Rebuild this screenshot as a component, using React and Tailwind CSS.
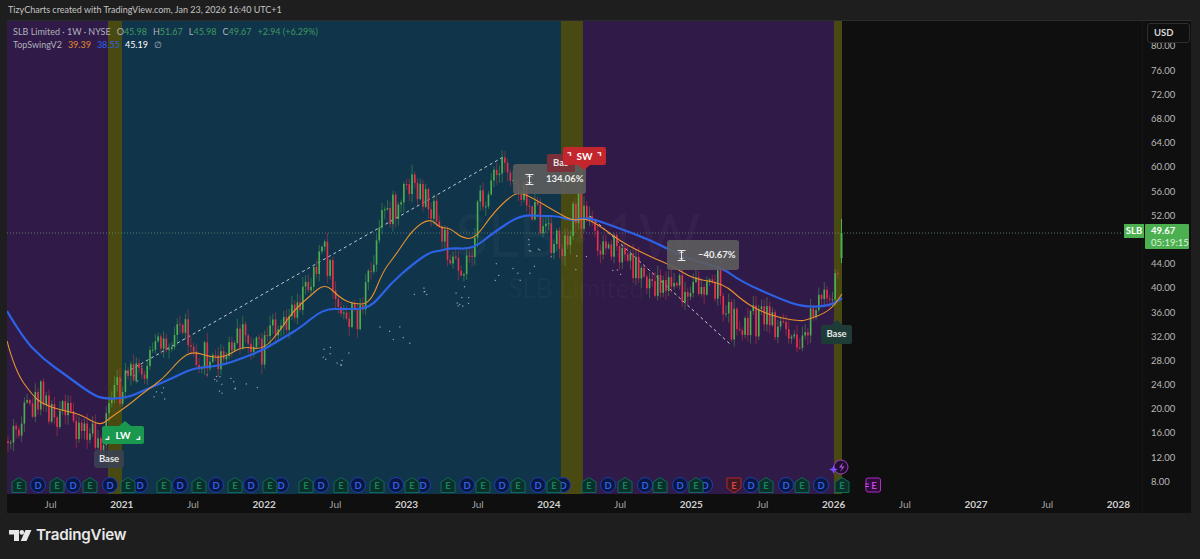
import React from "react";

const sans = "font-['Lato','Liberation_Sans',sans-serif]";
const svgFont = "Lato, sans-serif";

// price path the candles follow, page coordinates
const pricePath = [[7,440],[20,425],[40,395],[50,410],[60,412],[75,420],[90,435],[103,440],[108,415],[115,395],[125,385],[135,375],[150,358],[165,340],[182,322],[195,350],[210,362],[225,360],[240,335],[255,345],[262,358],[275,320],[290,310],[305,290],[322,245],[335,290],[340,322],[360,310],[375,260],[385,205],[395,210],[412,185],[425,195],[445,240],[460,265],[470,250],[478,210],[490,185],[505,170],[520,185],[535,215],[550,240],[565,240],[575,205],[585,215],[600,240],[620,255],[640,270],[660,285],[675,285],[690,300],[700,282],[720,282],[725,310],[732,325],[750,320],[770,320],[790,325],[803,335],[815,315],[830,295],[834,280],[842,232]];
const orange = [[7,340],[15,370],[33,395],[43,403],[60,409],[80,413],[100,425],[110,417],[130,403],[143,392],[163,378],[180,358],[193,350],[213,357],[227,355],[243,345],[263,349],[280,330],[293,310],[310,295],[325,282],[340,297],[353,303],[370,303],[383,270],[395,255],[413,228],[430,217],[440,227],[450,227],[462,237],[475,238],[493,212],[513,193],[523,192],[543,203],[558,212],[573,220],[587,217],[607,230],[623,242],[653,257],[673,265],[693,278],[723,282],[743,300],[760,310],[780,317],[800,320],[807,319],[830,310],[842,293]];
const blue = [[7,310],[23,337],[43,358],[67,375],[90,392],[103,398],[127,397],[147,388],[173,377],[193,367],[220,365],[243,357],[263,349],[283,337],[300,327],[323,308],[345,308],[370,308],[390,283],[413,263],[430,251],[440,250],[450,247],[473,248],[493,232],[520,214],[543,215],[558,215],[573,220],[587,216],[613,225],[653,240],[687,258],[723,267],[740,280],[780,298],[803,306],[830,305],[842,297]];

function rng(seed) {
  return () => {
    seed = (seed + 0x6d2b79f5) | 0;
    let t = Math.imul(seed ^ (seed >>> 15), 1 | seed);
    t = (t + Math.imul(t ^ (t >>> 7), 61 | t)) ^ t;
    return ((t ^ (t >>> 14)) >>> 0) / 4294967296;
  };
}

function priceAt(x) {
  for (let i = 1; i < pricePath.length; i++) {
    const [x0, y0] = pricePath[i - 1];
    const [x1, y1] = pricePath[i];
    if (x <= x1) return y0 + ((y1 - y0) * (x - x0)) / (x1 - x0);
  }
  return 232;
}

function makeCandles() {
  const r = rng(42);
  const out = [];
  let prev = priceAt(7);
  for (let x = 8; x < 840; x += 2.73) {
    const close = priceAt(x) + (r() - 0.5) * 34;
    const top = Math.min(prev, close);
    const bottom = Math.max(prev, close);
    out.push({
      x,
      open: prev,
      close,
      high: top - r() * 9 - 1,
      low: bottom + r() * 9 + 1,
    });
    prev = close;
  }
  return out;
}

function makeDots() {
  const r = rng(7);
  const clusters = [[232,382,14,26,10],[132,372,5,14,8],[165,392,5,14,6],[335,355,10,16,10],[455,295,9,14,10],[395,335,6,16,10],[420,285,5,14,8],[512,265,8,24,14],[540,248,7,18,10],[580,262,3,6,8],[620,270,3,12,6]];
  const dots = [];
  clusters.forEach(([cx, cy, n, sx, sy]) => {
    for (let i = 0; i < n; i++) {
      dots.push([cx + (r() - 0.5) * sx * 2, cy + (r() - 0.5) * sy * 2]);
    }
  });
  return dots;
}

// rounds the corners of a polyline through the midpoints
function smooth(pts) {
  let d = `M${pts[0][0]} ${pts[0][1]}`;
  for (let i = 1; i < pts.length - 1; i++) {
    const mx = (pts[i][0] + pts[i + 1][0]) / 2;
    const my = (pts[i][1] + pts[i + 1][1]) / 2;
    d += `Q${pts[i][0]} ${pts[i][1]} ${mx} ${my}`;
  }
  const last = pts[pts.length - 1];
  return `${d}L${last[0]} ${last[1]}`;
}

const candles = makeCandles();
const dots = makeDots();

const earnings = [19,57,90,128,164,199,235,270,306,341,377,412,448,483,518,554,589,625,660,696,766,802,842];
const dividends = [38,73,110,140,180,216,251,281,321,358,396,423,467,502,538,563,608,645,680,705,751,786,821];

const prices = ["80.00","76.00","72.00","68.00","64.00","60.00","56.00","52.00","","44.00","40.00","36.00","32.00","28.00","24.00","20.00","16.00","12.00","8.00"];
const times = ["Jul","2021","Jul","2022","Jul","2023","Jul","2024","Jul","2025","Jul","2026","Jul","2027","Jul","2028"];

function EarningMark({ x, red }) {
  return (
    <g>
      <path
        d={red
          ? `M${x - 7} 477h14v10l-7 5l-7-5z`
          : `M${x} 476.5l7 4.5v10.5h-14v-10.5z`}
        fill={red ? "#3f1a20" : "#0b2f2a"}
        stroke={red ? "#b3262e" : "#0e6b58"}
        strokeWidth="1"
      />
      <text x={x} y="488" textAnchor="middle" fontSize="9.5" fontWeight="700" fill={red ? "#d9434c" : "#17865f"} fontFamily={svgFont}>E</text>
    </g>
  );
}

function DividendMark({ x }) {
  return (
    <g>
      <circle cx={x} cy="484" r="7.5" fill="#0a1740" stroke="#1c3fb0" strokeWidth="1" />
      <text x={x} y="487.5" textAnchor="middle" fontSize="9.5" fontWeight="700" fill="#2f5fe8" fontFamily={svgFont}>D</text>
    </g>
  );
}

function Chart() {
  return (
    <svg viewBox="7 20 1135 473" className="block w-full h-full">
      <rect x="7" y="20" width="101" height="473" fill="#301a48" />
      <rect x="108" y="20" width="14" height="473" fill="#484a12" />
      <rect x="122" y="20" width="439" height="473" fill="#10344a" />
      <rect x="561" y="20" width="22" height="473" fill="#484a12" />
      <rect x="583" y="20" width="251" height="473" fill="#301a48" />
      <rect x="834" y="20" width="8" height="473" fill="#484a12" />

      <text x="578" y="256" textAnchor="middle" fontSize="60" fontFamily={svgFont} fill="#ffffff" fillOpacity="0.03">SLB · 1W</text>
      <text x="576" y="297" textAnchor="middle" fontSize="26" fontFamily={svgFont} fill="#ffffff" fillOpacity="0.03">SLB Limited</text>

      <line x1="7" y1="232" x2="1123" y2="232" stroke="#6f8f78" strokeWidth="0.8" strokeDasharray="1 2" />

      {dots.map(([x, y], i) => (
        <rect key={i} x={x} y={y} width="1.2" height="1.2" fill="#c8ced8" fillOpacity="0.75" />
      ))}

      <polyline points="125,372 505,155" fill="none" stroke="#d8dce2" strokeWidth="0.9" strokeDasharray="3 3" />
      <polyline points="590,215 730,343" fill="none" stroke="#d8dce2" strokeWidth="0.9" strokeDasharray="3 3" />

      {candles.map((c, i) => {
        const up = c.close < c.open;
        const color = up ? "#4caf50" : "#e8324a";
        return (
          <g key={i}>
            <line x1={c.x} x2={c.x} y1={c.high} y2={c.low} stroke={color} strokeOpacity="0.8" strokeWidth="0.6" />
            <rect x={c.x - 0.8} y={Math.min(c.open, c.close)} width="1.6" height={Math.max(Math.abs(c.open - c.close), 1)} fill={color} />
          </g>
        );
      })}
      <line x1="841.5" x2="841.5" y1="218" y2="262" stroke="#4caf50" strokeWidth="1" />
      <rect x="840.5" y="232" width="2" height="25" fill="#4caf50" />

      <path d={smooth(blue)} fill="none" stroke="#2d62e6" strokeWidth="2.2" />
      <path d={smooth(orange)} fill="none" stroke="#e8912d" strokeWidth="1.1" />

      {dividends.map((x) => <DividendMark key={x} x={x} />)}
      {earnings.map((x) => <EarningMark key={x} x={x} />)}
      <EarningMark x={734} red />

      <circle cx="841" cy="466" r="7" fill="#1f1030" stroke="#a43cc4" strokeWidth="1" />
      <path d="M843 461.5l-4 5h3l-2 4.5l4.5-5.5h-3z" fill="#c04fe0" />
      <path d="M833.5 464l1.2 3.3l3.3 1.2l-3.3 1.2l-1.2 3.3l-1.2-3.3l-3.3-1.2l3.3-1.2z" fill="#7c4dff" />
      <rect x="866" y="477" width="14.5" height="14" rx="2" fill="#2b0d35" stroke="#b02cc8" strokeWidth="1" />
      <path d="M865 483h4M865 485.5h4" stroke="#d040e8" strokeWidth="1" />
      <text x="874" y="488" textAnchor="middle" fontSize="9.5" fontWeight="700" fill="#d040e8" fontFamily={svgFont}>E</text>
    </svg>
  );
}

function MeasureIcon() {
  return (
    <svg width="9" height="11" viewBox="0 0 9 11" fill="none" stroke="#e8e8e8" strokeWidth="1">
      <path d="M0.5 0.5h8M0.5 10.5h8M4.5 1v9M2.5 3.2l2-2l2 2M2.5 7.8l2 2l2-2" />
    </svg>
  );
}

function Measure({ className, children }) {
  return (
    <div className={`absolute h-[30px] bg-[#5d5d5d]/90 rounded-[3px] flex items-center text-[9.5px] font-bold text-[#ececec] ${className}`}>
      <MeasureIcon />
      <span className="ml-[12px]">{children}</span>
    </div>
  );
}

export default function App() {
  return (
    <div className={`w-[1200px] h-[559px] overflow-hidden bg-[#1e1e1e] flex flex-col ${sans}`}>
      <div className="h-[20px] pl-2 flex items-center text-[9px] text-[#c4c4c4]">
        TizyCharts created with TradingView.com, Jan 23, 2026 16:40 UTC+1
      </div>

      <div className="ml-[7px] w-[1184px] h-[493px] bg-[#0f0f0f] flex border-t border-[#2a2d2e]">
        <div className="w-[1135px] flex flex-col">
          <div className="relative h-[473px]">
            <Chart />

            <div className="absolute left-[6px] top-[4px] text-[9px] leading-[13px] text-[#aeb2ba]">
              <div className="flex">
                <span>SLB Limited · 1W · NYSE</span>
                <span className="ml-[6px] text-[#aeb2ba]">O<span className="text-[#3f9a62]">45.98</span></span>
                <span className="ml-[6px]">H<span className="text-[#3f9a62]">51.67</span></span>
                <span className="ml-[6px]">L<span className="text-[#3f9a62]">45.98</span></span>
                <span className="ml-[6px]">C<span className="text-[#3f9a62]">49.67</span></span>
                <span className="ml-[6px] text-[#3f9a62]">+2.94 (+6.29%)</span>
              </div>
              <div className="flex">
                <span>TopSwingV2</span>
                <span className="ml-[6px] text-[#e8892d]">39.39</span>
                <span className="ml-[6px] text-[#2d62e6]">38.55</span>
                <span className="ml-[5px] text-white">45.19</span>
                <span className="ml-[6px]">∅</span>
              </div>
            </div>

            <Measure className="left-[506px] top-[143px] w-[73px] pl-[12px]">134.06%</Measure>
            <Measure className="left-[660px] top-[219px] w-[72px] pl-[10px]">−40.67%</Measure>

            <div className="absolute left-[87px] top-[429px] w-[30px] h-[18px] rounded-[3px] bg-[#3b4150]/90 flex items-center justify-center text-[9.5px] font-bold text-[#e6e6e6]">Base</div>
            <div className="absolute left-[95px] top-[405px] w-[42px] h-[18px] rounded-[2px] bg-[#1a9850] flex items-center justify-center text-[10px] font-bold text-white gap-[5px]">
              <span className="absolute left-[23px] -top-[5px] w-0 h-0 border-x-[6px] border-x-transparent border-b-[5px] border-b-[#1a9850] -translate-x-[6px]" />
              <span>⌟</span><span>LW</span><span>⌟</span>
            </div>

            <div className="absolute left-[540px] top-[133px] w-[28px] h-[18px] rounded-[2px] bg-[#7a3038] flex items-center pl-[6px] text-[9.5px] font-bold text-[#e6e6e6]">Bas</div>
            <div className="absolute left-[556px] top-[126px] w-[43px] h-[18px] rounded-[2px] bg-[#c4262e] flex items-center justify-center text-[10px] font-bold text-white gap-[5px]">
              <span>⌝</span><span>SW</span><span>⌝</span>
              <span className="absolute left-[15px] top-[18px] w-0 h-0 border-x-[6px] border-x-transparent border-t-[5px] border-t-[#c4262e]" />
            </div>

            <div className="absolute left-[814px] top-[304px] w-[31px] h-[19px] rounded-[2px] bg-[#1d3c38] flex items-center justify-center text-[9.5px] font-bold text-[#e6e6e6]">
              <span className="absolute left-[9.5px] -top-[5px] w-0 h-0 border-x-[6px] border-x-transparent border-b-[5px] border-b-[#1d3c38]" />
              Base
            </div>
          </div>

          <div className="h-[20px] pl-[8px] flex items-center text-[10px] border-t border-[#0f0f0f]">
            {times.map((t, i) => (
              <span key={i} className={`w-[71.2px] shrink-0 text-center ${t === "Jul" ? "text-[#a4a4a4]" : "text-[#d0d0d0] font-bold"}`}>{t}</span>
            ))}
          </div>
        </div>

        <div className="relative w-[49px] border-l border-[#161616]">
          <div className="pt-[13.5px] pl-[8px] text-[9.5px] text-[#b8b8b8]">
            {prices.map((p, i) => (
              <div key={i} className="h-[24.2px] flex items-center">{p}</div>
            ))}
          </div>

          <div className="absolute left-[4px] top-[2px] w-[43px] h-[20px] bg-[#0f0f0f] border border-[#2e2e2e] rounded-[3px] flex items-center pl-[6px] text-[9.5px] font-bold text-[#d6d6d6]">USD</div>

          <div className="absolute -left-[19px] top-[203px] w-[20px] h-[14px] bg-[#4caf50] flex items-center justify-center text-[9.5px] font-bold text-white">SLB</div>
          <div className="absolute left-[2px] top-[203px] w-[44px] h-[25px] bg-[#4caf50] rounded-[1px] flex flex-col justify-center pl-[6px] text-[9.5px] leading-[12px] text-white">
            <span className="font-bold">49.67</span>
            <span className="text-[#dff2df]">05:19:15</span>
          </div>
        </div>
      </div>

      <div className="flex-1 flex items-center pl-[9px] pb-[1px]">
        <svg width="23" height="12" viewBox="0 0 23 12" fill="#e8e8e8">
          <path d="M0 0h10v11h-5v-6.5h-5z" />
          <circle cx="12.8" cy="2.4" r="2.3" />
          <path d="M16.5 0h6l-5 11h-5.8z" />
        </svg>
        <span className="ml-[4px] text-[15.2px] font-semibold text-[#e8e8e8] tracking-[-0.2px] font-['Inter',sans-serif]">TradingView</span>
      </div>
    </div>
  );
}
